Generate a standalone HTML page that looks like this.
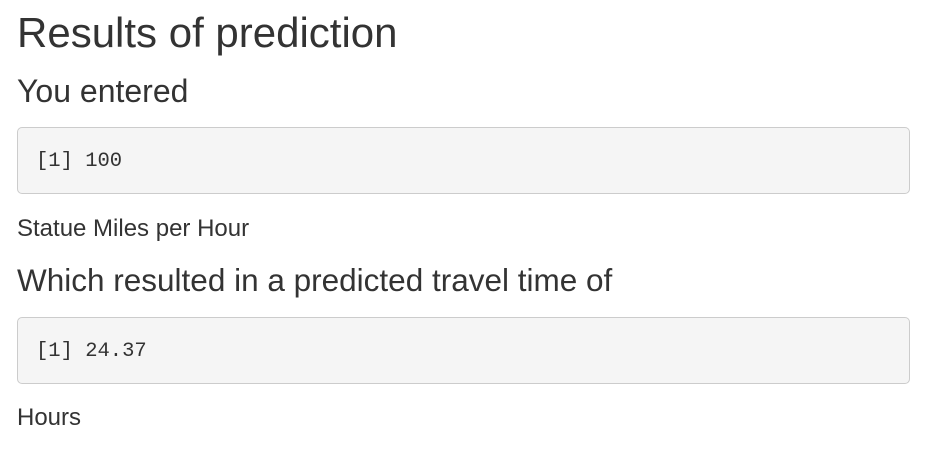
<!DOCTYPE html>
<html><head><meta charset="utf-8"><style>
html,body{margin:0;padding:0;background:#fff;width:932px;height:451px;overflow:hidden;color:#333;font-family:"Liberation Sans",Arial,sans-serif}
.t{position:absolute;left:17px;white-space:nowrap;line-height:1}
.pre{position:absolute;left:17px;width:893px;height:67px;background:#f5f5f5;border:1px solid #ccc;border-radius:5px;box-sizing:border-box}
.m{position:absolute;left:36px;font-family:"Liberation Mono","DejaVu Sans Mono",monospace;font-size:20.5px;line-height:1;color:#333;white-space:pre}
</style></head><body>
<div class="t" style="top:12px;font-size:42px">Results of prediction</div>
<div class="t" style="top:75px;font-size:32px">You entered</div>
<div class="pre" style="top:127px"></div>
<div class="m" style="top:152px">[1] 100</div>
<div class="t" style="top:217px;font-size:24px">Statue Miles per Hour</div>
<div class="t" style="top:265px;font-size:31.5px">Which resulted in a predicted travel time of</div>
<div class="pre" style="top:317px"></div>
<div class="m" style="top:342px">[1] 24.37</div>
<div class="t" style="top:406px;font-size:24px">Hours</div>
</body></html>
